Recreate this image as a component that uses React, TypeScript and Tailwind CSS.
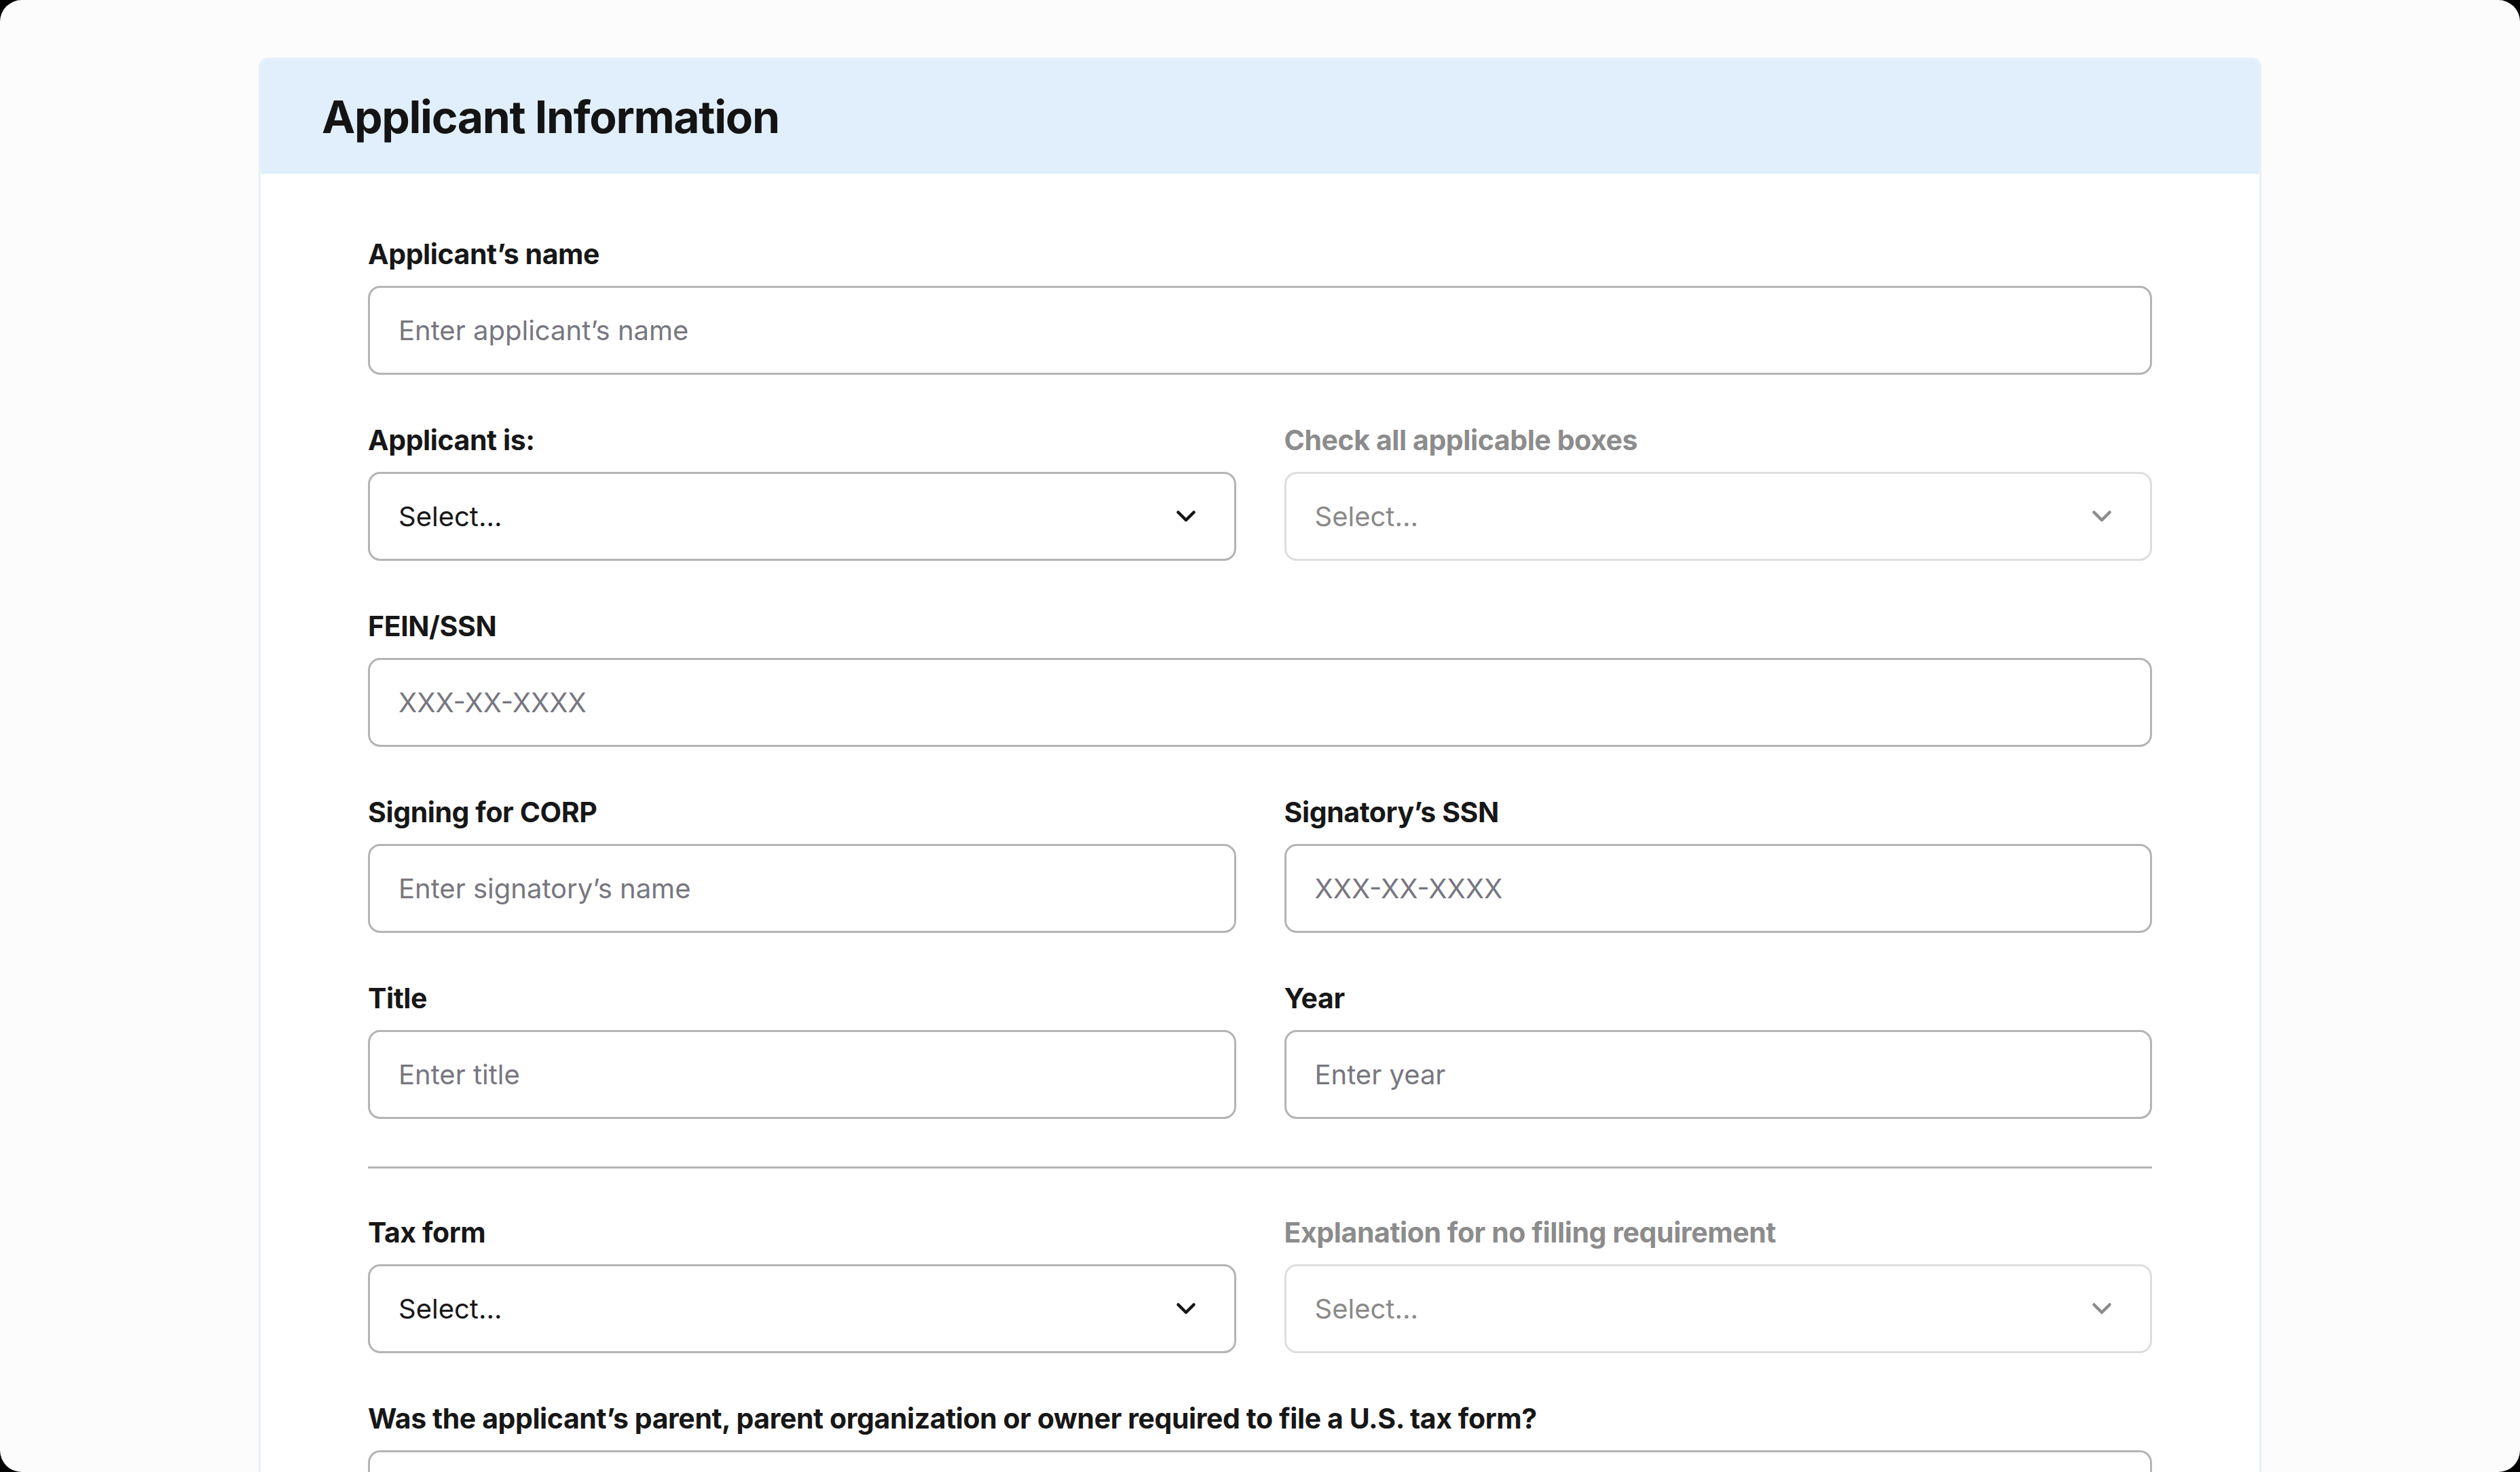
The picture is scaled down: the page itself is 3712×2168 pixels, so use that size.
import React from "react";

const font = { fontFamily: "Inter, 'Noto Sans', sans-serif" };

const Chevron: React.FC<{ muted?: boolean }> = ({ muted }) => (
  <svg width="30" height="19" viewBox="0 0 30 19" fill="none" className="shrink-0">
    <polyline
      points="3.5,3.5 15,15 26.5,3.5"
      stroke={muted ? "#8c8c8c" : "#141414"}
      strokeWidth="4.5"
      strokeLinecap="round"
      strokeLinejoin="round"
    />
  </svg>
);

type FieldProps = {
  label: string;
  placeholder?: string;
  select?: boolean;
  disabled?: boolean;
};

const Field: React.FC<FieldProps> = ({ label, placeholder, select, disabled }) => (
  <div className="flex flex-col gap-[23px] min-w-0">
    <label
      className={`text-[41px] leading-[48px] font-bold tracking-[-0.01em] ${
        disabled ? "text-[#8c8c8c]" : "text-[#171717]"
      }`}
    >
      {label}
    </label>
    <div
      className={`h-[131px] rounded-[18px] border-[3px] bg-white flex items-center justify-between pl-[42px] pr-[56px] ${
        disabled ? "border-[#dedede]" : "border-[#b4b4b4]"
      }`}
    >
      {select ? (
        <>
          <span className={`text-[40px] ${disabled ? "text-[#8a8a8a]" : "text-[#171717]"}`}>Select...</span>
          <Chevron muted={disabled} />
        </>
      ) : (
        <span className="text-[40px] text-[#77777f]">{placeholder}</span>
      )}
    </div>
  </div>
);

export default function App() {
  return (
    <div className="bg-black h-[2168px] w-[3712px] overflow-hidden" style={font}>
      <div className="h-full w-full rounded-[32px] bg-[#fcfcfc] pt-[85px] overflow-hidden">
        <div className="mx-auto w-[2950px] rounded-t-[14px] border-[3px] border-b-0 border-[#e5f0fc] bg-white overflow-hidden">
          <div className="h-[168px] bg-[#e1effc] flex items-center px-[90px]">
            <h1 className="text-[66px] font-bold tracking-[-0.02em] text-[#141414]">Applicant Information</h1>
          </div>
          <div className="px-[158px] pt-[94px] pb-[200px] flex flex-col gap-[72px]">
            <Field label="Applicant’s name" placeholder="Enter applicant’s name" />
            <div className="grid grid-cols-2 gap-[71px]">
              <Field label="Applicant is:" select />
              <Field label="Check all applicable boxes" select disabled />
            </div>
            <Field label="FEIN/SSN" placeholder="XXX-XX-XXXX" />
            <div className="grid grid-cols-2 gap-[71px]">
              <Field label="Signing for CORP" placeholder="Enter signatory’s name" />
              <Field label="Signatory’s SSN" placeholder="XXX-XX-XXXX" />
            </div>
            <div className="grid grid-cols-2 gap-[71px]">
              <Field label="Title" placeholder="Enter title" />
              <Field label="Year" placeholder="Enter year" />
            </div>
            <div className="h-[3px] bg-[#b4b4b4] -my-[2px]" />
            <div className="grid grid-cols-2 gap-[71px]">
              <Field label="Tax form" select />
              <Field label="Explanation for no filling requirement" select disabled />
            </div>
            <Field
              label="Was the applicant’s parent, parent organization or owner required to file a U.S. tax form?"
              placeholder=""
            />
          </div>
        </div>
      </div>
    </div>
  );
}
